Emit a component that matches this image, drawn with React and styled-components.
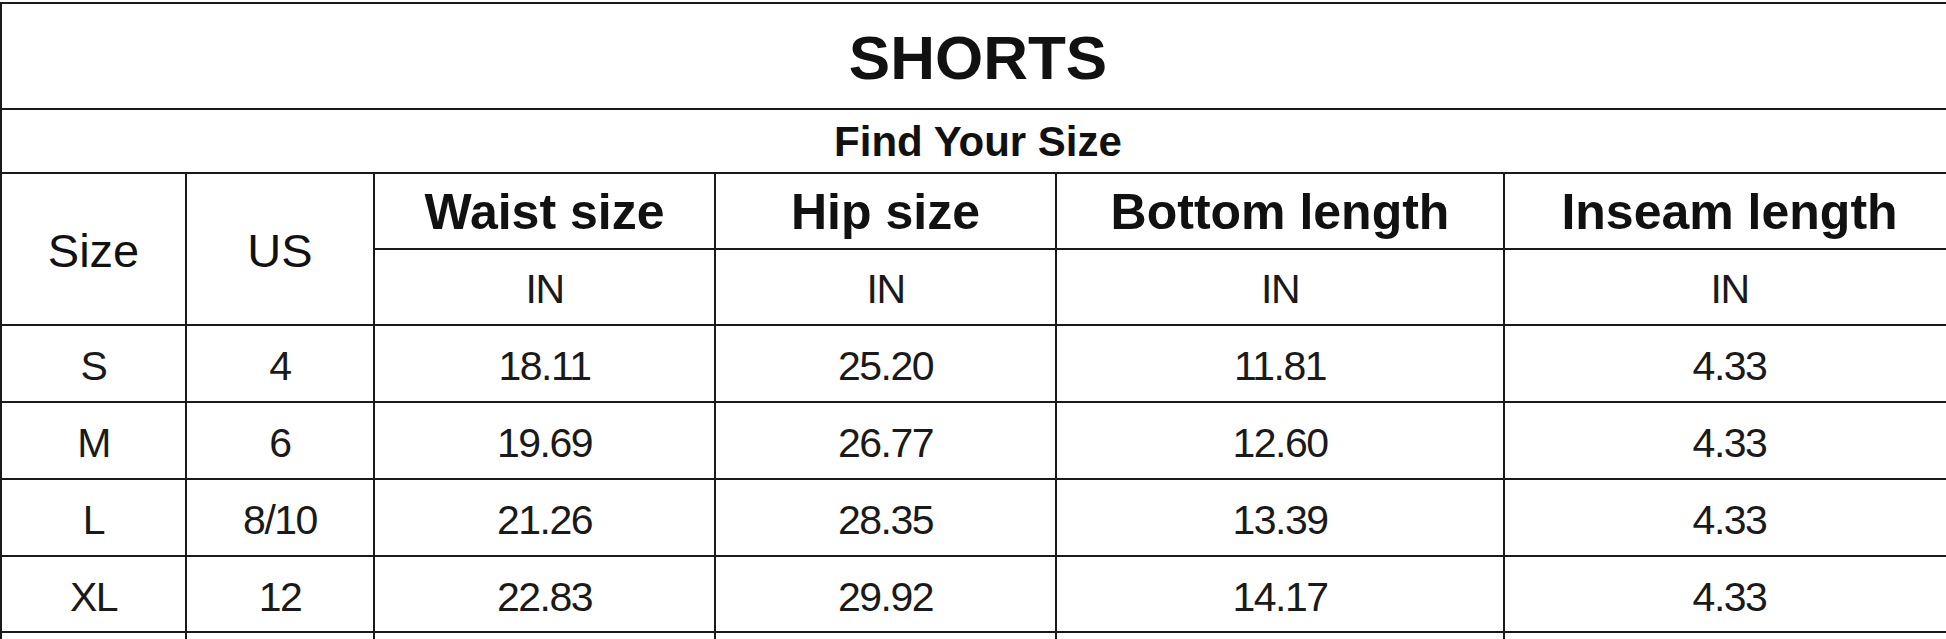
import React from "react";
import styled, { createGlobalStyle } from "styled-components";

const GlobalStyle = createGlobalStyle`
  html, body {
    margin: 0;
    padding: 0;
    background: #fff;
  }
  body {
    font-family: "Liberation Sans", Arial, sans-serif;
    color: #111;
  }
`;

const Frame = styled.div`
  width: 100%;
  height: 639px;
  overflow: hidden;
  padding-top: 2px;
  box-sizing: border-box;
`;

const Chart = styled.div`
  display: grid;
  width: 1956px;
  grid-template-columns: 187px 188px 341px 341px 448px 451px;
  grid-template-rows: 106px 64px 76px 76px 77px 77px 77px 76px 77px;
  border-top: 2px solid #1a1a1a;
  box-sizing: border-box;
`;

const Cell = styled.div`
  box-sizing: border-box;
  display: flex;
  align-items: center;
  justify-content: center;
  border-right: 2px solid #1a1a1a;
  border-bottom: 2px solid #1a1a1a;
  border-left: ${(p) => (p.$first ? "2px solid #1a1a1a" : "none")};
  grid-column: ${(p) => (p.$cols ? `span ${p.$cols}` : "auto")};
  grid-row: ${(p) => (p.$rows ? `span ${p.$rows}` : "auto")};
  white-space: nowrap;
`;

const Title = styled.span`
  font-size: 62px;
  font-weight: bold;
  padding-top: 3px;
`;

const Subtitle = styled.span`
  font-size: 42px;
  font-weight: bold;
  padding-top: 2px;
`;

const HeadText = styled.span`
  font-size: 50px;
  font-weight: bold;
  padding-top: 2px;
`;

const LabelText = styled.span`
  font-size: 47px;
  padding-top: 2px;
`;

const ValueText = styled.span`
  font-size: 41px;
  letter-spacing: -1.5px;
  padding-top: ${(p) => (p.$low ? "6px" : "4px")};
  color: #1a1a1a;
`;

const columns = ["Waist size", "Hip size", "Bottom length", "Inseam length"];

const rows = [
  ["S", "4", "18.11", "25.20", "11.81", "4.33"],
  ["M", "6", "19.69", "26.77", "12.60", "4.33"],
  ["L", "8/10", "21.26", "28.35", "13.39", "4.33"],
  ["XL", "12", "22.83", "29.92", "14.17", "4.33"],
];

export default function App() {
  return (
    <>
      <GlobalStyle />
      <Frame>
        <Chart>
          <Cell $first $cols={6}>
            <Title>SHORTS</Title>
          </Cell>
          <Cell $first $cols={6}>
            <Subtitle>Find Your Size</Subtitle>
          </Cell>

          <Cell $first $rows={2}>
            <LabelText>Size</LabelText>
          </Cell>
          <Cell $rows={2}>
            <LabelText>US</LabelText>
          </Cell>
          {columns.map((c) => (
            <Cell key={c}>
              <HeadText>{c}</HeadText>
            </Cell>
          ))}
          {columns.map((c) => (
            <Cell key={c + "-unit"}>
              <ValueText>IN</ValueText>
            </Cell>
          ))}

          {rows.map((r) =>
            r.map((v, i) => (
              <Cell key={r[0] + i} $first={i === 0}>
                <ValueText $low>{v}</ValueText>
              </Cell>
            ))
          )}
          {/* next row starts just below the visible area */}
          {[0, 1, 2, 3, 4, 5].map((i) => (
            <Cell key={"tail" + i} $first={i === 0} />
          ))}
        </Chart>
      </Frame>
    </>
  );
}
